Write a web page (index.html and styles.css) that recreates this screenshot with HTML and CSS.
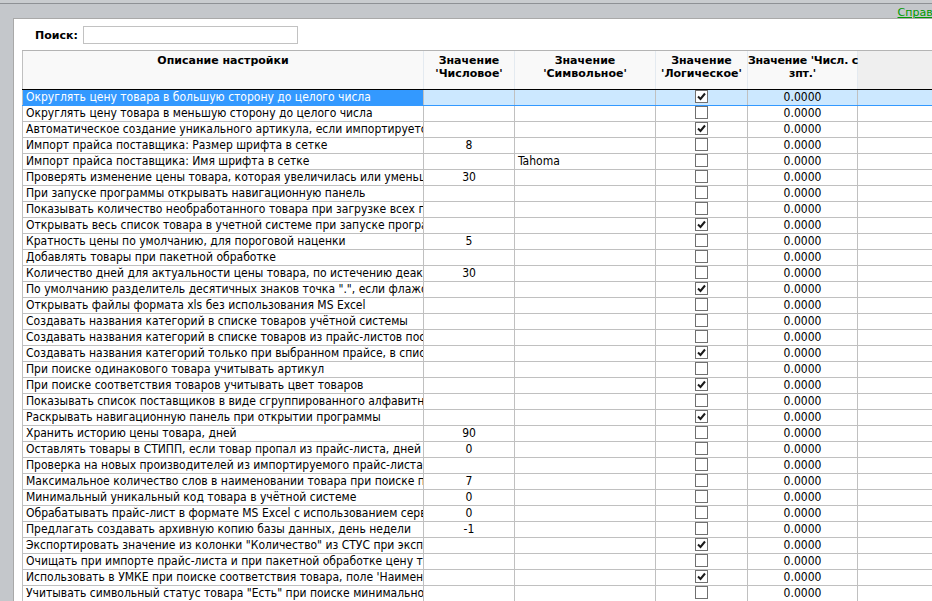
FILE: index.html
```html
<!DOCTYPE html>
<html>
<head>
    <title>Настройки</title>
    <link rel="stylesheet" href="styles.css">
</head>
<body>
    <div class="top-bar">
        <a href="#" class="help-link">Справка</a>
    </div>

    <div class="panel">
        <div class="search-row">
            <label for="search-input">Поиск:</label>
            <input type="text" id="search-input" />
        </div>

        <div class="grid-wrap">
            <table class="settings-grid">
                <colgroup>
                    <col class="col-desc">
                    <col class="col-num">
                    <col class="col-str">
                    <col class="col-bool">
                    <col class="col-dec">
                    <col class="col-fill">
                </colgroup>
                <thead>
                    <tr>
                        <th>Описание настройки</th>
                        <th>Значение<br>'Числовое'</th>
                        <th>Значение<br>'Символьное'</th>
                        <th>Значение<br>'Логическое'</th>
                        <th class="tight">Значение 'Числ. с<br>зпт.'</th>
                        <th class="fill"></th>
                    </tr>
                </thead>
                <tbody id="settings-body"></tbody>
            </table>
        </div>
    </div>

    <script>
        // [описание, числовое, символьное, логическое]
        const settings = [
            ["Округлять цену товара в большую сторону до целого числа", "", "", true],
            ["Округлять цену товара в меньшую сторону до целого числа", "", "", false],
            ["Автоматическое создание уникального артикула, если импортируется товар без артикула", "", "", true],
            ["Импорт прайса поставщика: Размер шрифта в сетке", "8", "", false],
            ["Импорт прайса поставщика: Имя шрифта в сетке", "", "Tahoma", false],
            ["Проверять изменение цены товара, которая увеличилась или уменьшилась, %", "30", "", false],
            ["При запуске программы открывать навигационную панель", "", "", false],
            ["Показывать количество необработанного товара при загрузке всех прайс-листов", "", "", false],
            ["Открывать весь список товара в учетной системе при запуске программы", "", "", true],
            ["Кратность цены по умолчанию, для пороговой наценки", "5", "", false],
            ["Добавлять товары при пакетной обработке", "", "", false],
            ["Количество дней для актуальности цены товара, по истечению деактивировать", "30", "", false],
            ["По умолчанию разделитель десятичных знаков точка \".\", если флажок снят - запятая", "", "", true],
            ["Открывать файлы формата xls без использования MS Excel", "", "", false],
            ["Создавать названия категорий в списке товаров учётной системы", "", "", false],
            ["Создавать названия категорий в списке товаров из прайс-листов поставщиков", "", "", false],
            ["Создавать названия категорий только при выбранном прайсе, в списке товаров", "", "", true],
            ["При поиске одинакового товара учитывать артикул", "", "", false],
            ["При поиске соответствия товаров учитывать цвет товаров", "", "", true],
            ["Показывать список поставщиков в виде сгруппированного алфавитного списка", "", "", false],
            ["Раскрывать навигационную панель при открытии программы", "", "", true],
            ["Хранить историю цены товара, дней", "90", "", false],
            ["Оставлять товары в СТИПП, если товар пропал из прайс-листа, дней", "0", "", false],
            ["Проверка на новых производителей из импортируемого прайс-листа, при импорте", "", "", false],
            ["Максимальное количество слов в наименовании товара при поиске по словам", "7", "", false],
            ["Минимальный уникальный код товара в учётной системе", "0", "", false],
            ["Обрабатывать прайс-лист в формате MS Excel с использованием сервера", "0", "", false],
            ["Предлагать создавать архивную копию базы данных, день недели", "-1", "", false],
            ["Экспортировать значение из колонки \"Количество\" из СТУС при экспорте", "", "", true],
            ["Очищать при импорте прайс-листа и при пакетной обработке цену товара", "", "", false],
            ["Использовать в УМКЕ при поиске соответствия товара, поле 'Наименование'", "", "", true],
            ["Учитывать символьный статус товара \"Есть\" при поиске минимальной цены", "", "", false]
        ];

        const tbody = document.getElementById("settings-body");
        const checkSvg = '<svg viewBox="0 0 11 11" width="11" height="11"><path d="M2 5.5 L4.5 8 L9 2.5" fill="none" stroke="#1a1a1a" stroke-width="2"/></svg>';

        settings.forEach((s, i) => {
            const tr = document.createElement("tr");
            if (i === 0) tr.className = "selected";
            tr.innerHTML =
                `<td class="desc">${s[0]}</td>` +
                `<td class="num">${s[1]}</td>` +
                `<td class="str">${s[2]}</td>` +
                `<td class="bool"><span class="checkbox">${s[3] ? checkSvg : ""}</span></td>` +
                `<td class="dec">0.0000</td>` +
                `<td class="fill"></td>`;
            tbody.appendChild(tr);
        });
    </script>
</body>
</html>
```

FILE: styles.css
```css
:root {
    --frame-bg: #c4c7cb;
    --grid-line: #c0c0c0;
    --header-bg: #f9f9f9;
    --select-bg: #3399ff;
    --select-light: #cce8ff;
    --link-color: #009a00;
}

body {
    font-family: "DejaVu Sans", Tahoma, sans-serif;
    font-size: 11px;
    margin: 0;
    padding: 0;
    background-color: var(--frame-bg);
    color: #000;
    overflow: hidden;
    height: 601px;
}

.top-bar {
    height: 15px;
    border-top: 3px solid #c9cccf;
    box-shadow: inset 0 1px 0 #8e9195;
    display: flex;
    justify-content: flex-end;
    align-items: center;
    overflow: hidden;
}

.help-link {
    color: var(--link-color);
    text-decoration: underline;
    white-space: nowrap;
    margin-right: -14px;
    padding-top: 3px;
}

.panel {
    margin-left: 13px;
    background-color: #fff;
    border-top: 1px solid #a9a9a9;
    border-left: 1px solid #a9a9a9;
    height: 600px;
    padding: 7px 0 0 8px;
    overflow: hidden;
}

.search-row {
    display: flex;
    align-items: center;
    gap: 5px;
    padding-left: 13px;
    height: 18px;
}

.search-row label {
    font-weight: bold;
}

#search-input {
    width: 215px;
    height: 18px;
    margin: 0;
    padding: 0 3px;
    box-sizing: border-box;
    border: 1px solid #c2c2c2;
}

.grid-wrap {
    margin-top: 6px;
    width: 1000px;
}

.settings-grid {
    border-collapse: collapse;
    table-layout: fixed;
    width: 1000px;
}

.col-desc { width: 401px; }
.col-num { width: 91px; }
.col-str { width: 141px; }
.col-bool { width: 92px; }
.col-dec { width: 110px; }

.settings-grid th {
    background-color: var(--header-bg);
    font-weight: bold;
    vertical-align: top;
    text-align: center;
    line-height: 13px;
    height: 39px;
    padding: 3px 2px 0;
    box-sizing: border-box;
    border-top: 1px solid #b4b4b4;
    border-left: 1px solid #e4eaf0;
    border-bottom: 1px solid #000;
    white-space: nowrap;
}

.settings-grid th.tight {
    padding: 3px 0 0;
    overflow: visible;
    letter-spacing: -0.2px;
}

.settings-grid th:first-child {
    border-left: 1px solid var(--grid-line);
}

.settings-grid th.fill {
    background-color: #efefef;
}

.settings-grid td {
    height: 15px;
    padding: 0 3px;
    border: 1px solid var(--grid-line);
    white-space: nowrap;
    overflow: hidden;
    line-height: 15px;
    font-family: "DejaVu Sans Condensed", "DejaVu Sans", sans-serif;
    font-size: 12px;
}

.settings-grid td.num,
.settings-grid td.bool,
.settings-grid td.dec {
    text-align: center;
}

.settings-grid td.fill {
    border-right: none;
}

.checkbox {
    display: inline-block;
    width: 11px;
    height: 11px;
    border: 1px solid #707070;
    background: #fff;
    vertical-align: middle;
    margin-top: -2px;
}

.checkbox svg {
    display: block;
}

tr.selected td {
    background-color: var(--select-light);
    border-bottom-color: var(--select-bg);
}

tr.selected td.desc {
    background-color: var(--select-bg);
    color: #fff;
}
```
